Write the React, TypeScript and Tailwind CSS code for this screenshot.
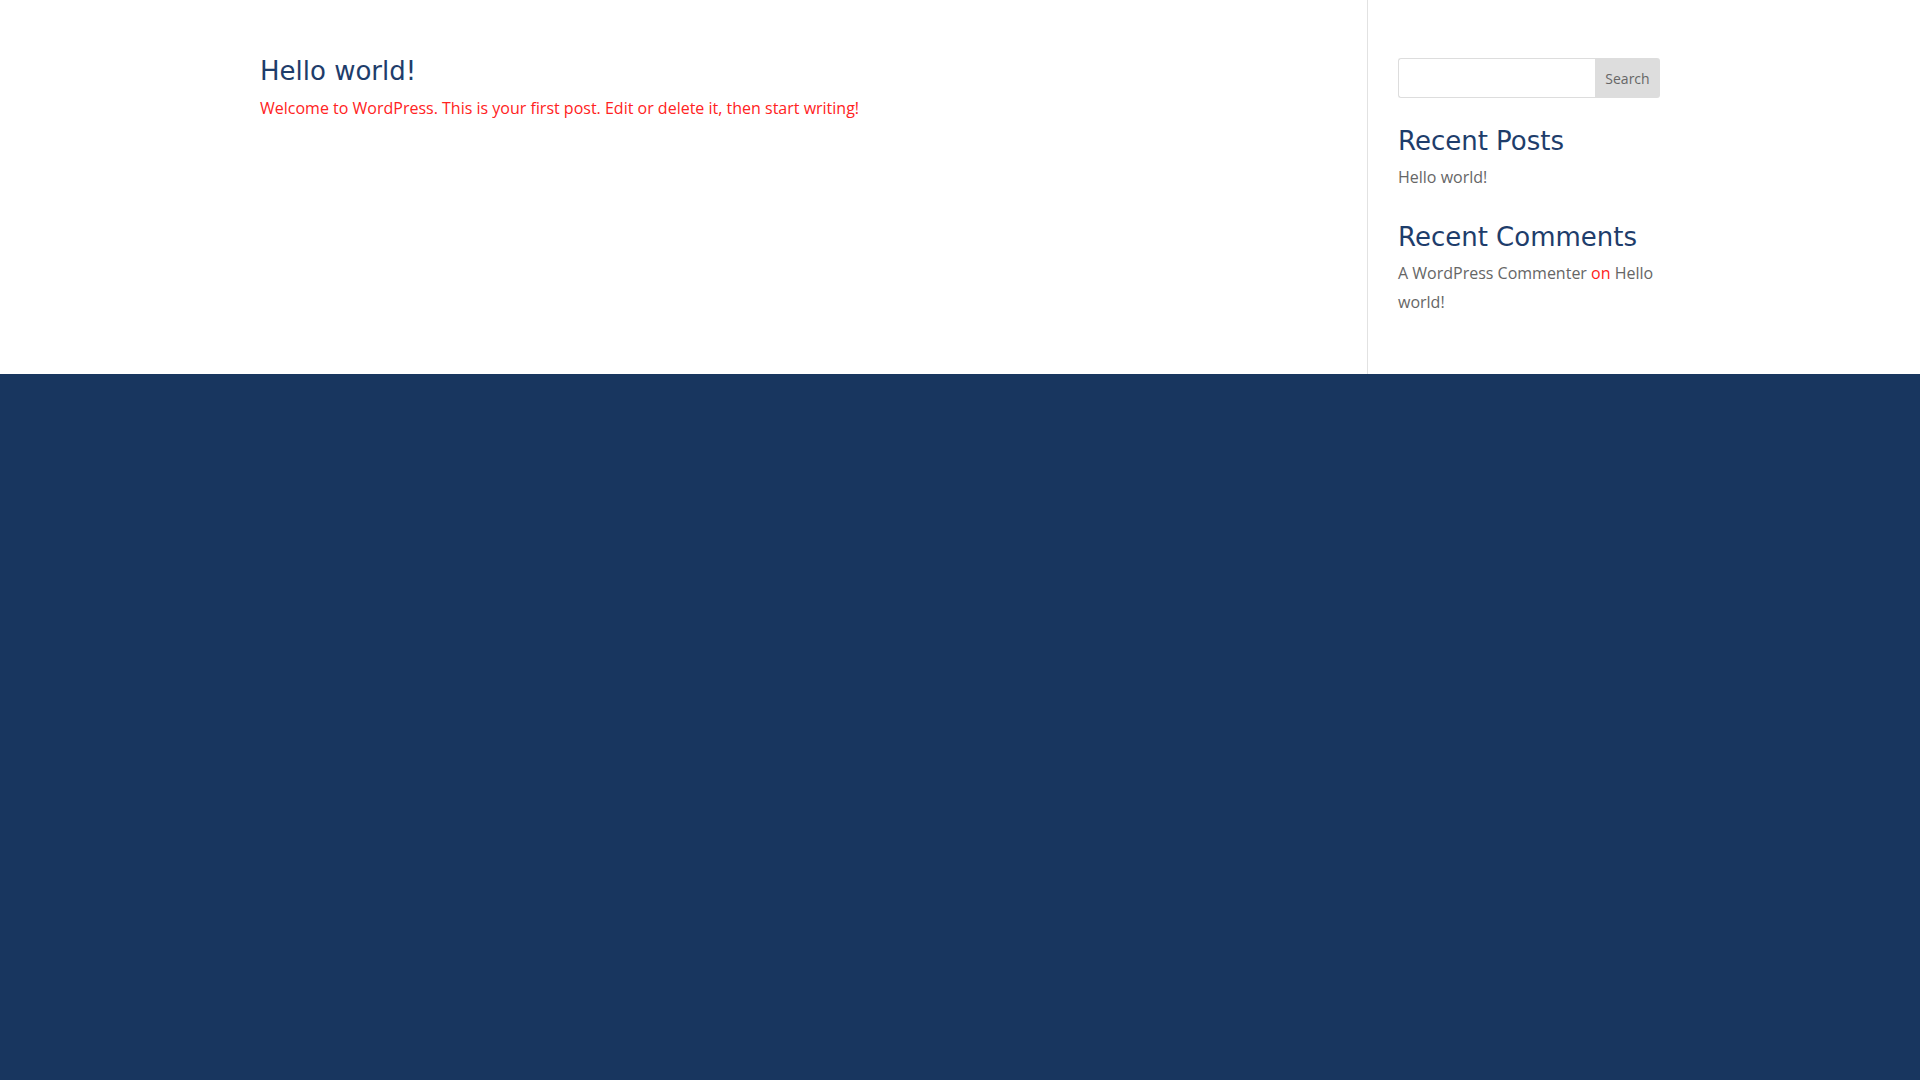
import React from 'react';

const heading = "font-['DejaVu_Sans',sans-serif] font-normal text-[#1e3d6b]";
const body = "font-['Open_Sans',sans-serif] text-[16px] leading-[29px]";

function SearchBox() {
    return (
        <form className="flex h-[40px] w-full" onSubmit={(e) => e.preventDefault()}>
            <input
                type="text"
                className="h-full flex-1 min-w-0 rounded-l-[3px] border border-r-0 border-[#dddddd] bg-white px-2 outline-none"
            />
            <button
                type="submit"
                className="h-full w-[65px] rounded-r-[3px] bg-[#dddddd] font-['Open_Sans',sans-serif] text-[14px] text-[#666666]"
            >
                Search
            </button>
        </form>
    );
}

export default function App() {
    return (
        <div className="min-h-screen bg-[#18365f]">
            <div className="bg-white">
                <div className="mx-auto flex w-[1400px]">
                    {/* Post list */}
                    <main className="flex-1 pt-[56px] pr-[60px]">
                        <article>
                            <h2 className={`${heading} text-[26px] leading-[30px] pb-[8px]`}>Hello world!</h2>
                            <p className={`${body} text-[#ff2222]`}>
                                Welcome to WordPress. This is your first post. Edit or delete it, then start writing!
                            </p>
                        </article>
                    </main>

                    {/* Sidebar */}
                    <aside className="w-[293px] border-l border-[#e2e2e2] pl-[30px] pt-[58px] pb-[57px]">
                        <SearchBox />
                        <div className="mt-[28px]">
                            <h4 className={`${heading} text-[26px] leading-[30px] pb-[7px]`}>Recent Posts</h4>
                            <a href="#" className={`${body} block text-[#666666]`}>Hello world!</a>
                        </div>
                        <div className="mt-[30px]">
                            <h4 className={`${heading} text-[26px] leading-[30px] pb-[7px]`}>Recent Comments</h4>
                            <p className={`${body} text-[#ff2222]`}>
                                <a href="#" className="text-[#666666]">A WordPress Commenter</a> on{' '}
                                <a href="#" className="text-[#666666]">Hello world!</a>
                            </p>
                        </div>
                    </aside>
                </div>
            </div>
        </div>
    );
}
